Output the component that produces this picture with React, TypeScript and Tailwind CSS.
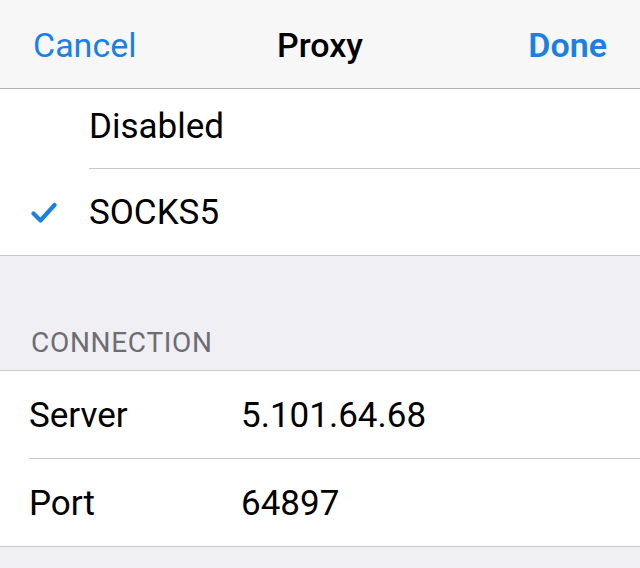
import { Fragment } from 'react';

const font = { fontFamily: 'Roboto, "Liberation Sans", sans-serif' };

function Check() {
  return (
    <svg width="26" height="22" viewBox="0 0 26 22" className="block">
      <path d="M2.5 11.5 L9.5 18.5 L23.5 3" fill="none" stroke="#1a80e5" strokeWidth="4.2" strokeLinecap="round" strokeLinejoin="round" />
    </svg>
  );
}

const fields = [
  { label: 'Server', value: '5.101.64.68' },
  { label: 'Port', value: '64897' },
];

export default function App() {
  return (
    <div className="w-[640px] h-[568px] overflow-hidden bg-[#efeff4]" style={font}>
      {/* Nav bar */}
      <div className="h-[89px] bg-[#f7f7f7] border-b border-[#b2b2b2] grid grid-cols-3 items-center px-[33px] pt-[2px] text-[34px]">
        <span className="text-[#1a80e5] justify-self-start">Cancel</span>
        <span className="font-medium text-black justify-self-center">Proxy</span>
        <span className="font-semibold text-[#1a80e5] justify-self-end">Done</span>
      </div>

      {/* Proxy type */}
      <div className="bg-white border-b border-[#c8c7cc] text-[35px] text-black">
        <div className="h-[80px] pl-[89px]">
          <div className="h-full border-b border-[#c8c7cc] flex items-center pb-[3px]">Disabled</div>
        </div>
        <div className="h-[86px] flex items-center pt-[2px]">
          <div className="w-[89px] pl-[31px]">
            <Check />
          </div>
          <span>SOCKS5</span>
        </div>
      </div>

      {/* Section header */}
      <div className="h-[114px] flex items-end pl-[31px] pb-[6px] text-[28px] text-[#6d6d72] tracking-[0.7px]">
        CONNECTION
      </div>

      {/* Connection fields */}
      <div className="bg-white border-y border-[#c8c7cc] text-[35px] text-black">
        {fields.map((f, i) => (
          <Fragment key={f.label}>
            {i > 0 && <div className="ml-[29px] border-t border-[#c8c7cc]" />}
            <div className="h-[87px] flex items-center pl-[29px] pt-[3px]">
              <span className="w-[212px]">{f.label}</span>
              <span>{f.value}</span>
            </div>
          </Fragment>
        ))}
      </div>
    </div>
  );
}
